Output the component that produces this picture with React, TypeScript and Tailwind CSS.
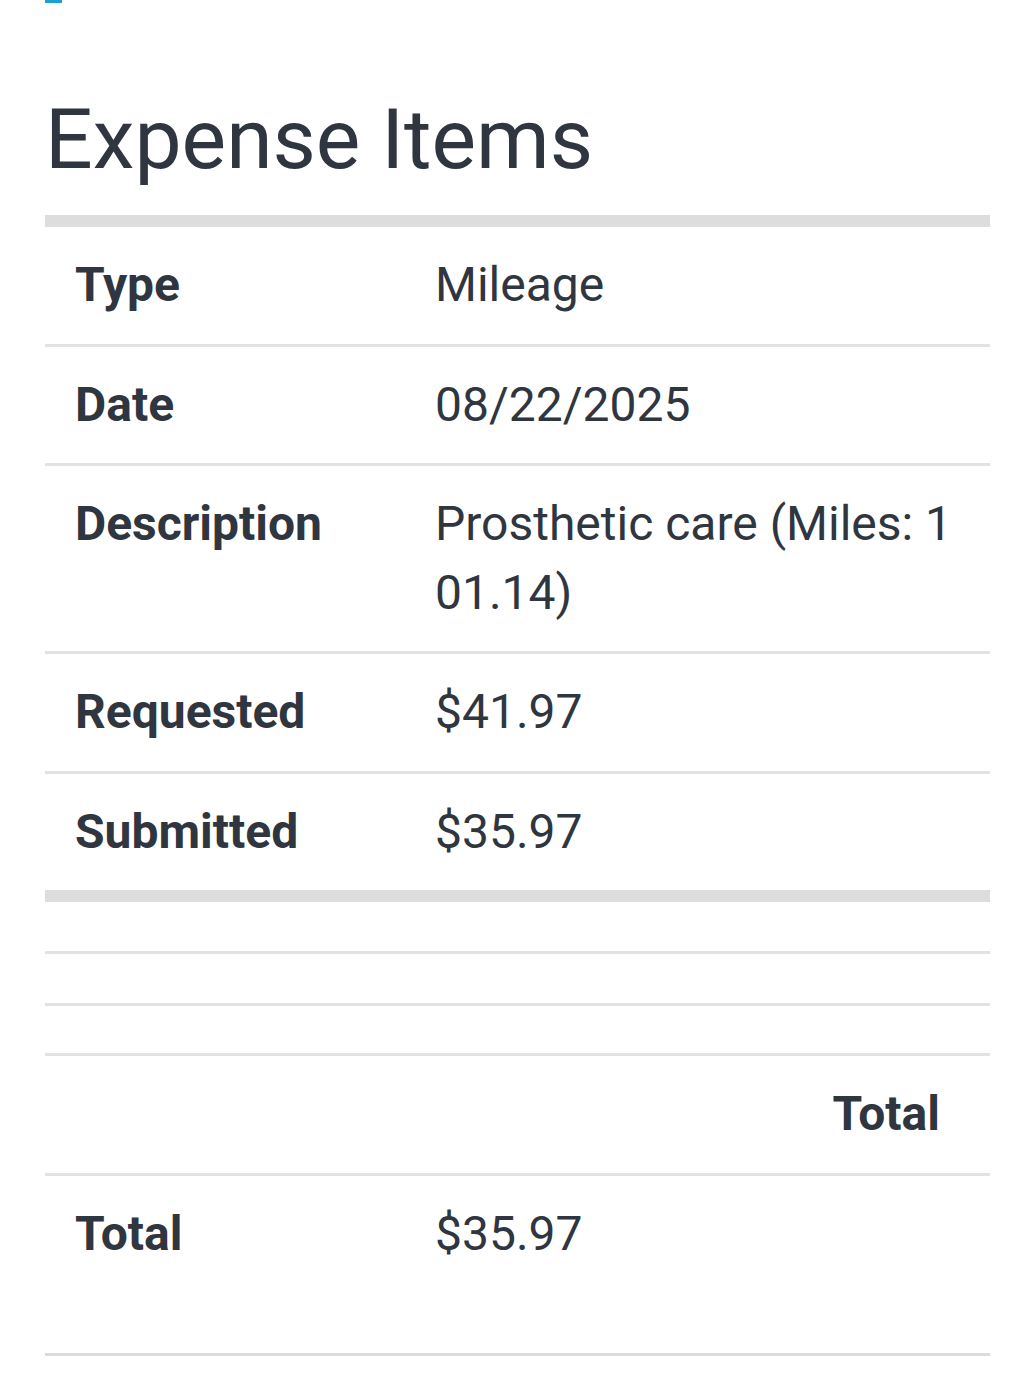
const ROWS: { label: string; value: string }[] = [
  { label: 'Type', value: 'Mileage' },
  { label: 'Date', value: '08/22/2025' },
  { label: 'Description', value: 'Prosthetic care (Miles: 101.14)' },
  { label: 'Requested', value: '$41.97' },
  { label: 'Submitted', value: '$35.97' },
];

function DetailRow({ label, value, last }: { label: string; value: string; last?: boolean }) {
  return (
    <div
      className={`grid grid-cols-[360px_1fr] text-[48px] leading-[1.428571] ${
        last ? '' : 'border-b-[3px] border-[#e2e2e2]'
      }`}
    >
      <div className="pl-[30px] pr-[30px] py-[24px] font-bold">{label}</div>
      <div className="pl-[30px] pr-[30px] py-[24px] break-all">{value}</div>
    </div>
  );
}

export default function App() {
  return (
    <div
      className="min-h-[1381px] bg-white text-[#2f3640] pl-[45px] pr-[39px]"
      style={{ fontFamily: 'Roboto, "Liberation Sans", sans-serif' }}
    >
      <div className="h-[3px] w-[17px] bg-[#1ba0d4]" />

      <h1 className="mt-[87px] text-[84px] leading-[100px] font-normal">Expense Items</h1>

      <div className="mt-[25px] border-t-[12px] border-[#dddddd]">
        {ROWS.map((row, i) => (
          <DetailRow key={row.label} label={row.label} value={row.value} last={i === ROWS.length - 1} />
        ))}
      </div>

      <div className="border-t-[12px] border-[#dddddd]">
        <div className="h-[52px] border-b-[3px] border-[#e2e2e2]" />
        <div className="h-[52px] border-b-[3px] border-[#e2e2e2]" />
        <div className="h-[50px] border-b-[3px] border-[#e2e2e2]" />

        <div className="border-b-[3px] border-[#e2e2e2] text-[48px] leading-[1.428571] font-bold text-right py-[24px] pr-[50px]">
          Total
        </div>

        <div className="grid grid-cols-[360px_1fr] text-[48px] leading-[1.428571] border-b-[3px] border-[#d9dbde]">
          <div className="pl-[30px] pr-[30px] pt-[24px] pb-[84px] font-bold">Total</div>
          <div className="pl-[30px] pr-[30px] pt-[24px] pb-[84px]">$35.97</div>
        </div>
      </div>
    </div>
  );
}
